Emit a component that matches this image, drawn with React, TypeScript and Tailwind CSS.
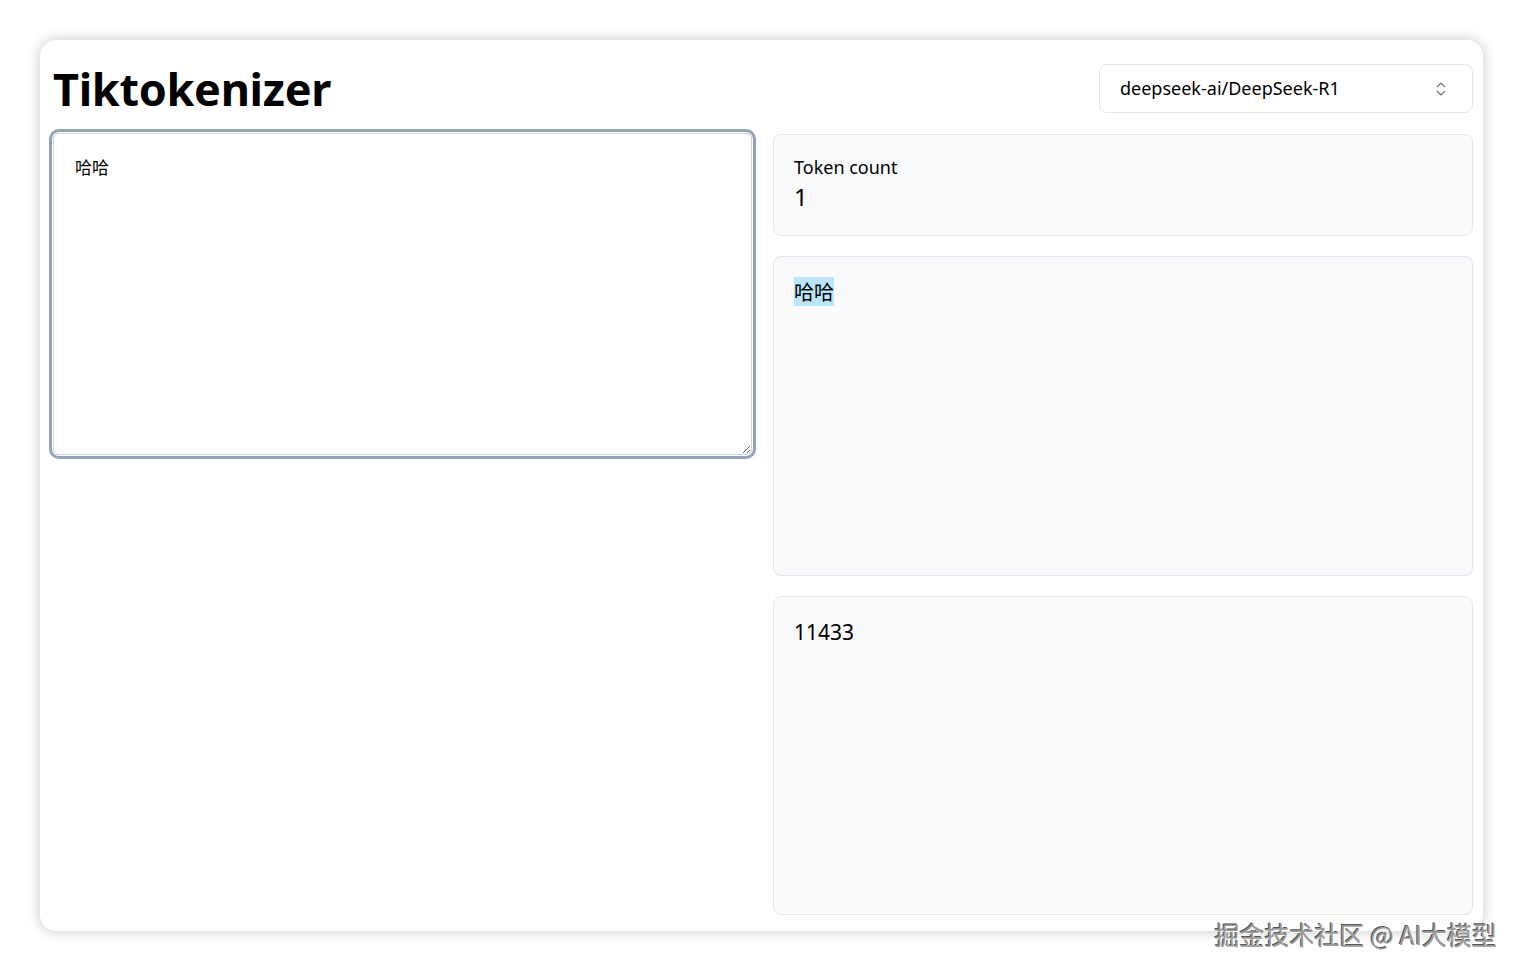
import React from "react";
import { ChevronsUpDown } from "lucide-react";

const sans = '"Noto Sans", "Noto Sans CJK SC", sans-serif';
const cjk = '"Noto Sans CJK SC", "Noto Sans", sans-serif';

export default function App() {
  return (
    <div className="relative h-[971px] w-[1523px] bg-white p-10" style={{ fontFamily: sans }}>
      <div className="flex h-[891px] flex-col rounded-2xl bg-white pb-4 pl-[13px] pr-[10px] pt-6 shadow-[0_0_14px_rgba(0,0,0,0.22)]">
        {/* header */}
        <div className="flex h-[49px] items-center justify-between">
          <h1 className="text-[45px] font-bold leading-none tracking-[-0.3px] text-black">Tiktokenizer</h1>
          <button className="flex h-[49px] w-[374px] items-center justify-between rounded-lg border border-gray-200 bg-white pl-5 pr-[22px] text-[18px] text-black">
            <span>deepseek-ai/DeepSeek-R1</span>
            <ChevronsUpDown className="h-[18px] w-[18px] text-gray-500" strokeWidth={1.5} />
          </button>
        </div>

        {/* body */}
        <div className="mt-5 grid flex-1 grid-cols-2 gap-5">
          <div className="pr-px">
            <textarea
              className="block h-[322px] w-full resize-y rounded-md border border-[#cbd5e1] px-[21px] pb-5 pt-5 text-[17px] text-black shadow-[0_0_0_1px_#ffffff,0_0_0_4px_#94a3b8] outline-none"
              style={{ fontFamily: cjk }}
              defaultValue="哈哈"
            />
          </div>

          <div className="flex flex-col gap-5 pt-px">
            <div className="h-[102px] rounded-lg border border-gray-200 bg-[#f8fafc] px-5 pt-[20px]">
              <div className="text-[18px] leading-[24px] text-black">Token count</div>
              <div className="text-[24px] leading-[35px] text-black">1</div>
            </div>
            <div className="h-[320px] rounded-lg border border-gray-200 bg-[#f8fafc] px-5 pt-[22px]">
              <span className="bg-[#bae6fd] text-[20px] leading-[25px] text-black" style={{ fontFamily: cjk }}>
                哈哈
              </span>
            </div>
            <div className="h-[319px] rounded-lg border border-gray-200 bg-[#f8fafc] px-5 pt-[20px]">
              <span className="text-[21px] text-black">11433</span>
            </div>
          </div>
        </div>
      </div>

      <div
        className="absolute bottom-[24px] right-[26px] text-[25px] leading-none text-[#9a9a9a]"
        style={{ fontFamily: cjk, textShadow: "1px 1px 0 #fff, -1px -1px 0 #555" }}
      >
        掘金技术社区 @ AI大模型
      </div>
    </div>
  );
}
